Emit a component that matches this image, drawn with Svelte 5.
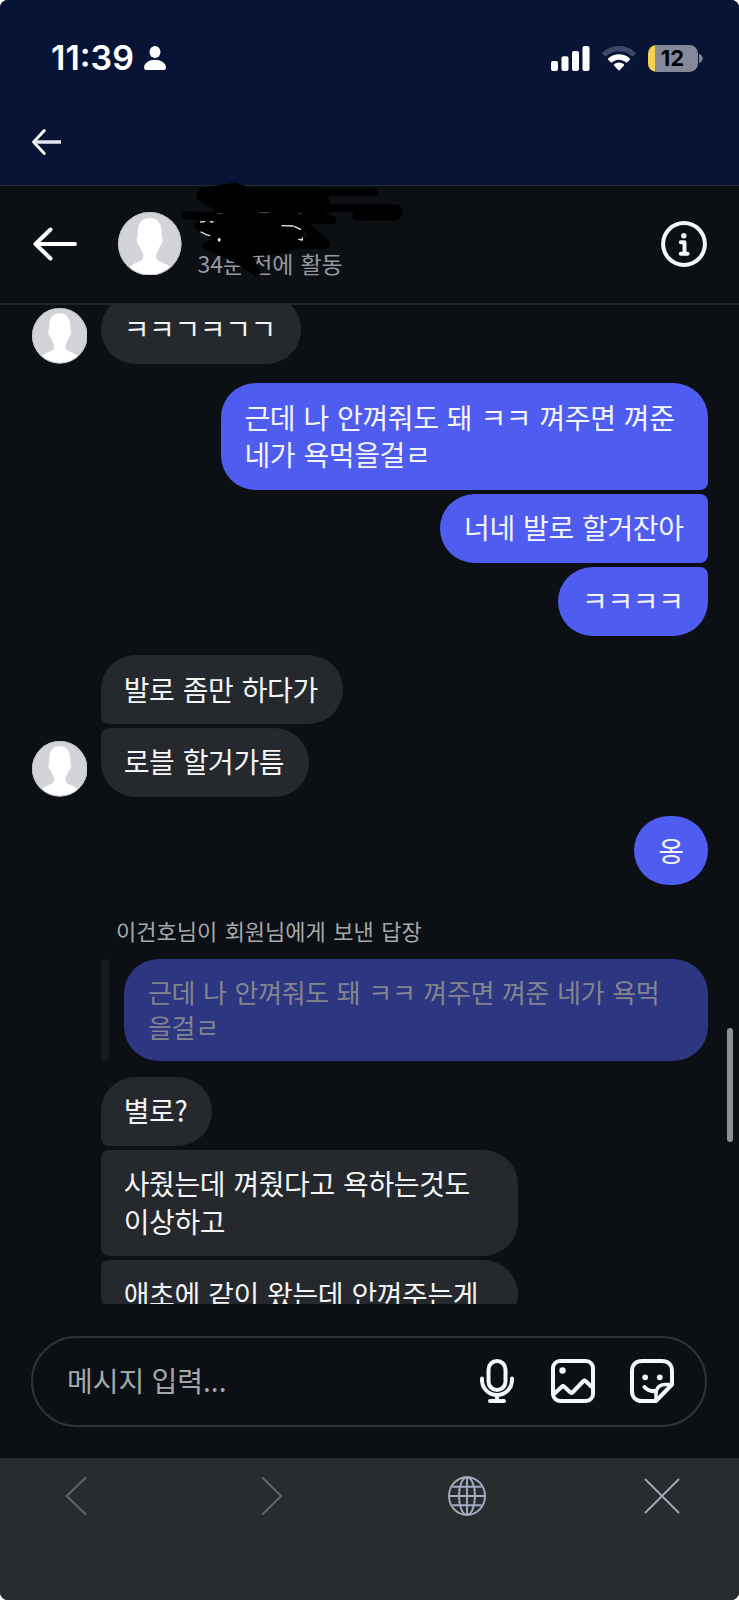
<script>
  const groups = [
    { side: 'in', avatar: true, items: [{ text: 'ㅋㅋㄱㅋㄱㄱ' }] },
    {
      side: 'out',
      items: [
        { text: '근데 나 안껴줘도 돼 ㅋㅋ 껴주면 껴준\n네가 욕먹을걸ㄹ', wide: true },
        { text: '너네 발로 할거잔아' },
        { text: 'ㅋㅋㅋㅋ' }
      ]
    },
    { side: 'in', avatar: true, items: [{ text: '발로 좀만 하다가' }, { text: '로블 할거가틈' }] },
    { side: 'out', items: [{ text: '옹' }] }
  ];
  const replies = [
    { text: '별로?' },
    { text: '사줬는데 껴줬다고 욕하는것도\n이상하고', wide: true },
    { text: '애초에 같이 왔는데 안껴주는게', wide: true }
  ];
</script>

{#snippet avatar()}
  <svg class="avatar" viewBox="0 0 64 64">
    <circle cx="32" cy="32" r="32" fill="#d3d4d9" />
    <path fill="#fff" d="M11 56c3-3.600 9-5.200 12.500-7.200 2-1.200 2.400-3.400 1.800-6.400-.3-1.800-2.700-4.800-3.700-8.400-1.800-.6-2.700-3.200-2.700-6 0-1.600.4-2.400 1-2.800C19.200 12 23 6 32 6s12.800 6 12.100 19.200c.6.4 1 1.200 1 2.800 0 2.800-.9 5.400-2.700 6-1 3.600-3.400 6.600-3.700 8.400-.6 3-.2 5.200 1.800 6.400C44 50.800 50 52.400 53 56a32 32 0 0 1-42 0z" />
    <circle cx="32" cy="32" r="31.500" fill="none" stroke="#bfc0c5" stroke-width="1" />
  </svg>
{/snippet}

<div class="screen">
  <div class="top">
    <div class="status">
      <span class="time">11:39</span>
      <svg class="person" width="22" height="24" viewBox="0 0 22 24" fill="#fff"><ellipse cx="11" cy="6" rx="5.500" ry="6" /><path d="M0 21.500C.5 17 5 13.800 11 13.800S21.500 17 22 21.500c0 1.600-.8 2.500-2.300 2.500H2.300C.8 24 0 23.100 0 21.500z" /></svg>
      <span class="spacer"></span>
      <svg class="signal" width="39" height="25" viewBox="0 0 39 25" fill="#fff"><rect x="0" y="15" width="7" height="10" rx="2" /><rect x="10.500" y="10.300" width="7" height="14.700" rx="2" /><rect x="21" y="5" width="7" height="20" rx="2" /><rect x="31.500" y="0" width="7" height="25" rx="2" /></svg>
      <svg class="wifi" width="34" height="25" viewBox="0 0 34 25"><path fill="#3d4766" d="M17 0c6.300 0 12 2.400 16.300 6.300.5.500.5 1.100.1 1.600l-2.200 2.300c-.4.400-1 .4-1.500 0C26.300 7.200 21.900 5.300 17 5.300S7.700 7.200 4.300 10.200c-.5.400-1.100.4-1.500 0L.6 7.900C.2 7.400.2 6.800.7 6.300 5 2.400 10.700 0 17 0z" /><path fill="#fff" d="M17 8.300c4.100 0 7.800 1.500 10.600 4 .5.500.5 1.100 0 1.600l-2.300 2.300c-.4.400-1 .4-1.500 0-1.800-1.600-4.200-2.500-6.800-2.500s-5 .9-6.800 2.500c-.5.400-1.100.4-1.500 0l-2.300-2.300c-.5-.5-.5-1.100 0-1.600 2.800-2.500 6.500-4 10.600-4zM17 16.500c1.800 0 3.500.7 4.800 1.800.5.400.5 1 0 1.500l-4 4.200c-.5.500-1.100.5-1.600 0l-4-4.200c-.5-.5-.5-1.100 0-1.500 1.300-1.100 3-1.800 4.800-1.800z" /></svg>
      <div class="battery"><span>12</span></div>
      <svg class="cap" width="4" height="9" viewBox="0 0 4 9"><path d="M0 0c2.500.8 3.600 2.400 3.600 4.500S2.500 8.200 0 9z" fill="#7e8496" /></svg>
    </div>
    <svg class="navback" width="30" height="26" viewBox="0 0 30 26" fill="none" stroke="#fff" stroke-linecap="round" stroke-linejoin="round"><path d="M12.300 1.600 1.600 13l10.700 11.400" stroke-width="2.900" /><path d="M3 13h26" stroke="#e3e5f1" stroke-width="3.300" stroke-linecap="butt" /></svg>
  </div>

  <header>
    <svg class="back" width="45" height="34" viewBox="0 0 45 34" fill="none" stroke="#fff" stroke-width="4" stroke-linecap="round" stroke-linejoin="round"><path d="M17.500 2.500 2.500 17l15 14.500M3 17h39" /></svg>
    <div class="head-avatar">{@render avatar()}</div>
    <div class="who"><span class="active">34분 전에 활동</span></div>
    <svg class="info" width="46" height="46" viewBox="0 0 46 46" fill="none" stroke="#f5f6f7"><circle cx="23" cy="23" r="20.900" stroke-width="4" /><circle cx="22.800" cy="14.700" r="2.700" fill="#f5f6f7" stroke="none" /><path d="M19.800 21.200h3.700v11.300M19.700 32.800h7" stroke-width="3.900" stroke-linecap="round" stroke-linejoin="round" /></svg>
    <svg class="scribble" width="250" height="110" viewBox="0 0 750 330" fill="none" stroke="#000" stroke-width="24" stroke-linecap="round" stroke-linejoin="round">
      <path fill="#000" d="M96 50L194 36 234 50H460L466 80 470 100H680Q692 108 684 116 676 122 662 123H560 680M470 100L440 122 488 135 H390L466 204Q470 212 456 211L380 208 366 196 H140L120 160 84 153 136 132 110 124 45 121 150 124 146 96Q90 70 90 60z" />
      <path fill="#000" d="M84 153L150 196 110 212 196 250 260 292 228 232 300 228 340 222 370 212 394 204 330 150H150z" />
      <path d="M180 40L196 34 240 52H612M560 125H676" />
      <g fill="#0c1014" stroke="none"><path d="M412 147L444 172 442 178 400 190 402 176 396 156z" /></g>
      <path stroke-width="20" d="M380 145L412 160 430 196 458 210" />
      <path stroke-width="24" d="M396 140L466 204" />
      <g stroke="#e8e8e8" stroke-width="4"><path d="M92 141l12-1M121 140l8 1M93 171l14 7 12 4" /><path d="M336 152l34 1M374 155l18 8M386 193l11 2v-6" /><path d="M147.500 193v3" stroke-width="8" /><path d="M142 115l14 1M268 113h30M386 115l10 2" stroke="#68696b" stroke-width="2" /></g>
    </svg>
  </header>

  <main>
    {#each groups as g}
      <section class={g.side}>
        {#if g.avatar}<div class="side-avatar">{@render avatar()}</div>{/if}
        <div class="stack">
          {#each g.items as m}<div class="bubble" class:wide={m.wide}>{m.text}</div>{/each}
        </div>
      </section>
    {/each}
    <div class="label">이건호님이 회원님에게 보낸 답장</div>
    <div class="quote">
      <i></i>
      <div class="quoted">{'근데 나 안껴줘도 돼 ㅋㅋ 껴주면 껴준 네가 욕먹\n을걸ㄹ'}</div>
    </div>
    <section class="in more">
      <div class="stack">
        {#each replies as m}<div class="bubble" class:wide={m.wide}>{m.text}</div>{/each}
      </div>
    </section>
    <div class="thumb"></div>
  </main>

  <div class="composer">
    <div class="field">
      <span>메시지 입력...</span>
      <svg width="36" height="46" viewBox="0 0 36 46" fill="none" stroke="#f5f6f7" stroke-width="4" stroke-linecap="round"><rect x="9.500" y="3" width="17" height="29" rx="8.500" /><path d="M3 20.500v1.500a15 15 0 0 0 30 0v-1.500M18 37.500V43M11 43h14" /></svg>
      <svg width="46" height="46" viewBox="0 0 46 46" fill="none" stroke="#f5f6f7" stroke-width="4" stroke-linejoin="round"><rect x="3" y="3" width="40" height="40" rx="7" /><circle cx="12.500" cy="12.500" r="3.200" fill="#f5f6f7" stroke="none" /><path d="M4 36l8-7.500q1-1 2 0l6.500 6q1 .8 2 0L33.500 23q1-1 2 0L43 30" /></svg>
      <svg width="46" height="46" viewBox="0 0 46 46" fill="none" stroke="#f5f6f7" stroke-width="4" stroke-linecap="round" stroke-linejoin="round"><path d="M27 43H13C7 43 3 39 3 33V13C3 7 7 3 13 3h20c6 0 10 4 10 10v13.500z" /><path d="M27 42v-6c0-6 3.500-9.500 9.500-9.500H42" stroke-width="3.500" /><path d="M15.500 29c3 3.500 7 4.500 11 4" /><circle cx="16.200" cy="19.300" r="2.900" fill="#f5f6f7" stroke="none" /><circle cx="30.800" cy="19.300" r="2.900" fill="#f5f6f7" stroke="none" /></svg>
    </div>
  </div>

  <nav>
    <svg width="22" height="40" viewBox="0 0 22 40" fill="none" stroke="#63676a" stroke-width="1.900" stroke-linecap="round"><path d="M20.300 2 1.700 20l18.600 18" /></svg>
    <svg width="22" height="40" viewBox="0 0 22 40" fill="none" stroke="#63676a" stroke-width="1.900" stroke-linecap="round"><path d="M1.700 2l18.600 18L1.700 38" /></svg>
    <svg width="40" height="40" viewBox="0 0 40 40" fill="none" stroke="#a4acc2" stroke-width="1.900"><ellipse cx="20" cy="20" rx="18" ry="18.800" /><ellipse cx="20" cy="20" rx="8" ry="18.800" /><path d="M20 1v38M2 20h36M5.500 10.800h29M5.500 29.200h29" /></svg>
    <svg width="36" height="36" viewBox="0 0 36 36" fill="none" stroke="#a4a9b9" stroke-width="1.900" stroke-linecap="round"><path d="M1.500 1.500l33 33M34.500 1.500l-33 33" /></svg>
  </nav>
</div>

<style>
  :global(body) { background: #fff; }
  .screen {
    width: 739px;
    height: 1600px;
    box-sizing: border-box;
    display: flex;
    flex-direction: column;
    overflow: hidden;
    border-radius: 8px;
    background: #0c1014;
    color: #f3f5f7;
    font-family: "Noto Sans CJK KR", sans-serif;
  }
  svg { display: block; flex: none; }
  .top { height: 185px; background: #071435; border-bottom: 1px solid #252a33; flex: none; }
  .status { display: flex; align-items: center; height: 56px; padding: 30px 36px 0 51px; }
  .time { font: 600 34px/40px Inter, sans-serif; color: #fff; letter-spacing: 0; width: 85px; white-space: nowrap; }
  .person { margin-left: 8px; }
  .spacer { flex: 1; }
  .wifi { margin-left: 12px; }
  .battery {
    width: 50px;
    height: 27px;
    margin-left: 12px;
    border-radius: 8.500px;
    background: linear-gradient(90deg, #f6d14f 0 7px, #848999 7px);
    font: 700 22px/27px Inter, sans-serif;
    color: #000;
    text-align: center;
  }
  .battery span { margin-left: -1px; }
  .cap { margin-left: 1px; }
  .navback { margin: 42.500px 0 0 31.500px; }

  header {
    position: relative;
    display: flex;
    align-items: center;
    flex: none;
    box-sizing: border-box;
    height: 119px;
    padding: 0 32px 2px 33px;
    border-bottom: 2px solid #202429;
  }
  .head-avatar { width: 63.500px; height: 63.500px; margin-left: 40px; }
  .avatar { width: 100%; height: 100%; }
  .who { flex: 1; padding: 39px 0 0 16px; }
  .active { display: block; font-size: 23px; line-height: 30px; color: #96999e; word-spacing: 1.800px; white-space: nowrap; }
  .scribble { position: absolute; left: 170px; top: -11px; z-index: 1; }

  main {
    position: relative;
    height: 999.300px;
    flex: none;
    overflow: hidden;
    display: flex;
    flex-direction: column;
  }
  section { display: flex; align-items: flex-end; flex: none; padding: 0 31.500px; margin-bottom: 19.700px; }
  section:first-child { margin-top: -10px; }
  .out { justify-content: flex-end; }
  .side-avatar { width: 55.500px; height: 55.500px; margin: 0 13.700px 0 0; flex: none; }
  .stack { display: flex; flex-direction: column; align-items: flex-start; gap: 4.200px; }
  .out .stack { align-items: flex-end; }
  .bubble {
    box-sizing: border-box;
    padding: 15.300px 24px 15.700px;
    border-radius: 34.500px;
    background: #25282c;
    font-size: 28px;
    line-height: 37.700px;
    letter-spacing: -0.4px;
    word-spacing: 2.400px;
    white-space: pre;
  }
  .in .bubble { padding-left: 23px; padding-right: 25px; }
  .in .bubble:not(:first-child) { border-top-left-radius: 8px; }
  .in .bubble:not(:last-child) { border-bottom-left-radius: 8px; }
  .in .wide { width: 417px; }
  .out .bubble { background: #4f5cf0; }
  .out .wide { width: 487px; }
  .out .bubble:not(:first-child) { border-top-right-radius: 8px; }
  .out .bubble:not(:last-child) { border-bottom-right-radius: 8px; }
  .label {
    flex: none;
    height: 54px;
    box-sizing: border-box;
    padding: 10.500px 0 0 116px;
    font-size: 22px;
    line-height: 30px;
    word-spacing: 2.500px;
    color: #a5a8ad;
    white-space: nowrap;
  }
  .quote { display: flex; flex: none; gap: 15.500px; padding: 0 31.500px 0 100.500px; }
  .quote i { width: 8px; border-radius: 3px; background: #181a1b; }
  .quoted {
    flex: 1;
    padding: 14.800px 24px 16.200px;
    border-radius: 34.500px;
    background: #2d3680;
    color: #83848e;
    font-size: 26px;
    line-height: 35.650px;
    letter-spacing: -0.3px;
    word-spacing: 2.300px;
    white-space: pre;
  }
  .more { margin-top: 15.700px; padding-left: 100.700px; }
  .thumb { position: absolute; right: 6px; top: 723px; width: 6px; height: 114px; border-radius: 3px; background: #8e9092; }

  .composer { flex: none; height: 154px; box-sizing: border-box; padding: 31.500px 32px 0 31px; }
  .field {
    display: flex;
    align-items: center;
    box-sizing: border-box;
    height: 91px;
    padding: 0 30px 0 34px;
    border: 2px solid #2f3236;
    border-radius: 45.500px;
  }
  .field span { flex: 1; font-size: 28px; line-height: 38px; color: #a4a7ab; margin-top: -3px; word-spacing: 1px; white-space: nowrap; }
  .field svg + svg { margin-left: 35px; }
  .field svg:last-child { margin-left: 33px; }
  nav {
    flex: 1;
    display: grid;
    grid-template-columns: 196px 186px 197px 36px;
    align-items: start;
    padding: 17.500px 0 0 65px;
    background: #282c2f;
  }
  nav svg:last-child { margin-top: 2px; }
</style>
